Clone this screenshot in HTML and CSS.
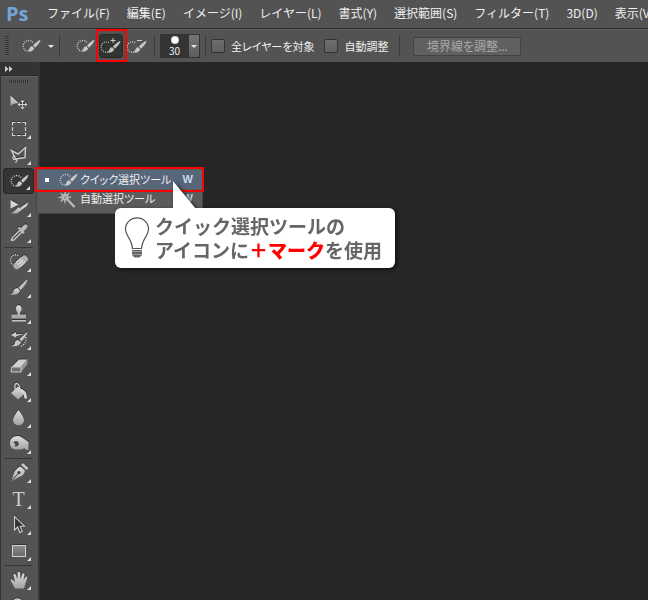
FILE: index.html
```html
<!DOCTYPE html>
<html lang="ja">
<head>
    <meta charset="UTF-8">
    <meta name="viewport" content="width=device-width, initial-scale=1.0">
    <title>クイック選択ツール</title>
    <link rel="stylesheet" href="styles.css">
</head>
<body>

<!-- アイコン定義 -->
<svg class="defs" aria-hidden="true">
    <defs>
        <linearGradient id="metal" x1="0" y1="0" x2="0" y2="1">
            <stop offset="0" stop-color="#dedede"/>
            <stop offset="1" stop-color="#a2a2a2"/>
        </linearGradient>
        <linearGradient id="fade" x1="0" y1="0" x2="0" y2="1">
            <stop offset="0" stop-color="#8c8c8c"/>
            <stop offset="1" stop-color="#686868"/>
        </linearGradient>
    </defs>
    <symbol id="quick" viewBox="0 0 22 20">
        <path d="M13 6.5A5.5 5.5 0 1 0 7 15.2" fill="none" stroke="#d2d2d2" stroke-width="1.3" stroke-dasharray="1 1.2"/>
        <path d="M20.5 4Q18 4 13 9.5L15 11.7Q20 7 20.5 4Z" fill="#c8c8c8"/>
        <path d="M12.3 10.2L14.3 12.4Q12.5 16.5 6.5 15.2Q9.5 14 9.5 12.2Q10.2 10 12.3 10.2Z" fill="#c8c8c8"/>
    </symbol>
    <symbol id="quick-add" viewBox="0 0 22 20">
        <path d="M9 6.6A5.2 5.2 0 1 0 8 16" fill="none" stroke="#bcbcbc" stroke-width="1.3" stroke-dasharray="1 1.2"/>
        <path d="M20.5 5Q18 5 13 10.5L15 12.7Q20 8 20.5 5ZM12.3 11.2L14.3 13.4Q12.5 17.5 6.5 16.2Q9.5 15 9.5 13.2Q10.2 11 12.3 11.2Z" fill="#bebebe"/>
        <path d="M10.5 4.5h5M13 2v5" stroke="#cfcfcf"/>
    </symbol>
    <symbol id="quick-sub" viewBox="0 0 22 20">
        <path d="M9 6.6A5.2 5.2 0 1 0 8 16" fill="none" stroke="#d2d2d2" stroke-width="1.3" stroke-dasharray="1 1.2"/>
        <path d="M20.5 5Q18 5 13 10.5L15 12.7Q20 8 20.5 5ZM12.3 11.2L14.3 13.4Q12.5 17.5 6.5 16.2Q9.5 15 9.5 13.2Q10.2 11 12.3 11.2Z" fill="#c8c8c8"/>
        <path d="M11 4.5h5" stroke="#d0d0d0"/>
    </symbol>
    <symbol id="wand" viewBox="0 0 22 20">
        <path d="M9 9L17.500 18" stroke="#bdbdbd" stroke-width="2.200"/>
        <path d="M8 1l1.300 4.500L13 3l-2 4.200 4.500.8L11 9.500l2 4-4-2.500L8 16 6.800 11 3 13.500 5 9.500 0 8.500l5-1.300L3 3.500l4 2z" fill="#b5b5b5"/>
        <circle cx="8" cy="8.500" r="1.500" fill="#999"/>
    </symbol>
</svg>

<header class="menubar">
    <span class="logo">Ps</span>
    <nav class="menu">
        <a href="#">ファイル(F)</a>
        <a href="#">編集(E)</a>
        <a href="#">イメージ(I)</a>
        <a href="#">レイヤー(L)</a>
        <a href="#">書式(Y)</a>
        <a href="#">選択範囲(S)</a>
        <a href="#">フィルター(T)</a>
        <a href="#">3D(D)</a>
        <a href="#">表示(V)</a>
    </nav>
</header>

<div class="options">
    <span class="grip"></span>
    <button class="preset" aria-label="ツールプリセット">
        <svg class="icon"><use href="#quick"/></svg>
        <span class="caret"></span>
    </button>
    <span class="divider"></span>
    <div class="modes">
        <button class="mode" aria-label="新規選択"><svg class="icon"><use href="#quick"/></svg></button>
        <button class="mode mode-on" aria-label="選択範囲に追加"><svg class="icon"><use href="#quick-add"/></svg></button>
        <button class="mode" aria-label="現在の選択範囲から一部削除"><svg class="icon"><use href="#quick-sub"/></svg></button>
    </div>
    <span class="divider"></span>
    <button class="brush" aria-label="ブラシサイズ 30">
        <span class="brush-size"><span class="dot"></span>30</span>
        <span class="brush-open"><span class="caret"></span></span>
    </button>
    <span class="divider"></span>
    <div class="checks">
        <label class="check"><input type="checkbox">全レイヤーを対象</label>
        <label class="check"><input type="checkbox">自動調整</label>
    </div>
    <span class="divider"></span>
    <button class="refine" disabled>境界線を調整...</button>
</div>

<main class="workspace">
    <aside class="toolbox">
        <button class="collapse" aria-label="パネルを展開">
            <svg width="8" height="6" viewBox="0 0 8 6"><path d="M0 0l3.500 3L0 6zM4 0l3.500 3L4 6z" fill="#d0d0d0"/></svg>
        </button>
        <div class="panel">
            <span class="panel-grip"></span>
            <button class="tool single" aria-label="移動">
                <svg viewBox="0 0 22 22"><path d="M2.500 3.500v10.500l3-2.300L11 11z" fill="url(#metal)"/><path d="M14.500 8v9M10 12.500h9" stroke="#d0d0d0"/><path d="M14.500 7.500l2 2.500h-4zM14.500 17.500l2-2.500h-4zM9.500 12.500l2.500-2v4zM19.500 12.500l-2.500-2v4z" fill="#d0d0d0"/></svg>
            </button>
            <button class="tool" aria-label="長方形選択">
                <svg viewBox="0 0 22 22"><path d="M4.500 7.500v-3h3M9 4.500h4M14.500 4.500h3v3M17.500 9v4M17.500 14.500v3h-3M13 17.500H9M7.500 17.500h-3v-3M4.500 13V9" fill="none" stroke="#d2d2d2" stroke-width="1.200"/></svg>
            </button>
            <button class="tool" aria-label="多角形選択">
                <svg viewBox="0 0 22 22"><path d="M3.500 6.500L10 10l7.500-6.500-.5 10L7.500 15z" fill="none" stroke="#cacaca" stroke-width="1.500"/><path d="M7.500 12.500q-3-1-2.500 1.500t3.500 1q1 1.500-1 3.500" fill="none" stroke="#cacaca" stroke-width="1.300"/></svg>
            </button>
            <button class="tool tool-on" aria-label="クイック選択"><svg viewBox="0 0 22 20"><use href="#quick"/></svg></button>
            <button class="tool" aria-label="スライス">
                <svg viewBox="0 0 22 22"><path d="M2.500 4l8 4.500-8 4z" fill="#d6d6d6"/><path d="M20.500 6L13 11l-2 4.500L19 10z" fill="#cfcfcf"/><path d="M11 11l2.500 3L9 17.500H3z" fill="url(#metal)"/></svg>
            </button>
            <button class="tool" aria-label="スポイト">
                <svg viewBox="0 0 22 22"><path d="M12 8l2 2-8 8-2.500.5L4 16z" fill="#555" stroke="#cdcdcd" stroke-width="1.300"/><path d="M9.500 6l2-1 1.500 1 3-3q2-1.500 3 0t-.5 3.500L16 9l.5 2-1.500 1z" fill="#b8b8b8"/></svg>
            </button>
            <hr>
            <button class="tool" aria-label="スポット修復ブラシ">
                <svg viewBox="0 0 22 22"><path d="M10 4.500A4.500 5 0 1 0 5 14" fill="none" stroke="#ddd" stroke-width="1.300" stroke-dasharray="1 1.200"/><g transform="rotate(-42 13 11)"><rect x="4" y="7.500" width="17" height="7" rx="3.500" fill="#aeaeae"/><rect x="9" y="7.500" width="7" height="7" fill="#d8d8d8"/><path d="M10 9.500h5.500M10 12.500h5.500" stroke="#555" stroke-dasharray="1 1.500"/></g></svg>
            </button>
            <button class="tool" aria-label="ブラシ">
                <svg viewBox="0 0 22 22"><path d="M19 2L10.500 10.500l2 2.500Q18 8 19.500 3z" fill="#bebebe"/><path d="M9.500 11l2.500 2.500Q10 19 2 17.500q3-1 3.500-3.500t4-3z" fill="url(#metal)"/></svg>
            </button>
            <button class="tool" aria-label="コピースタンプ">
                <svg viewBox="0 0 22 22"><path d="M9.500 9.500Q7.500 7 8 4.500T10.500 2t3 2.500-1.500 5v2h6v4H3.500v-4h6z" fill="url(#metal)"/><path d="M4 17.800h14" stroke="#d2d2d2" stroke-width="1.400"/></svg>
            </button>
            <button class="tool" aria-label="ヒストリーブラシ">
                <svg viewBox="0 0 22 22"><path d="M3 6l5-3v2.200q5-.7 8 .3-4 0-8 1.700V8.500z" fill="#cecece"/><path d="M19 3L11.500 10l2 2.500Q18 8 19.500 3.500zM10.500 11l2.500 2.200Q11 18.500 3 17q4-1 4-3.500t3.500-2.500z" fill="#c6c6c6"/><path d="M18 8q.5 7-5 9" fill="none" stroke="#ddd" stroke-width="1.400" stroke-dasharray="1.200 1.300"/></svg>
            </button>
            <button class="tool" aria-label="消しゴム">
                <svg viewBox="0 0 22 22"><path d="M3.500 12L11 4.500h8.500L13 12z" fill="#d0d0d0"/><path d="M19.500 4.500v4.500L13 17v-5z" fill="#999"/><path d="M3.500 12H13v5H3z" fill="#707070" stroke="#c8c8c8"/></svg>
            </button>
            <button class="tool" aria-label="塗りつぶし">
                <svg viewBox="0 0 22 22"><path d="M3 12L10 5.500l8 6L10 18.500z" fill="url(#metal)"/><path d="M7 9V4.500q.5-3 3-1.500t1 8" fill="none" stroke="#cfcfcf" stroke-width="1.300"/><path d="M13 8q5.500 1 6 8.500-1 3-3-.5.500-3.500-3-5z" fill="#d6d6d6"/></svg>
            </button>
            <button class="tool" aria-label="ぼかし">
                <svg viewBox="0 0 22 22"><path d="M10.500 3q5.500 7 5.500 10a5.500 5.200 0 0 1-11 0q0-3 5.500-10z" fill="url(#metal)"/></svg>
            </button>
            <button class="tool" aria-label="スポンジ">
                <svg viewBox="0 0 22 22"><path d="M4 5q4-3.500 10-.5l6.500 4.500v7.500q-3 1.500-4-1.500-3 2-6.500 1.500-7 .5-8-5Q1.500 7 4 5z" fill="url(#metal)"/><path d="M4.500 10.500q1-2.500 3.500-2.500t3 3q-1 3-4 2.500z" fill="#484848"/><path d="M2 9.500q3-.5 4.500.8t.5 2.500q-4 0-5-3.300z" fill="#bbb"/></svg>
            </button>
            <hr>
            <button class="tool" aria-label="ペン">
                <svg viewBox="0 0 22 22"><path d="M13 3l2-2 5.500 5-2 2z" fill="#c5c5c5"/><path d="M12.500 4.500l4.500 4q-1 5-5.500 6.500L3 19.500 6 11q2-5 6.500-6.500z" fill="url(#metal)"/><path d="M3.500 19L11 10.500" stroke="#484848"/><circle cx="11" cy="10.500" r="1.500" fill="#3d3d3d"/></svg>
            </button>
            <button class="tool tool-type" aria-label="横書き文字">T</button>
            <button class="tool" aria-label="パスコンポーネント選択">
                <svg viewBox="0 0 22 22"><path d="M6.500 2.500v13.500l3.200-3 2 5.500 2.500-1-2-5 4.300-.5z" fill="#333" stroke="#cdcdcd" stroke-width="1.100"/></svg>
            </button>
            <button class="tool" aria-label="長方形">
                <svg viewBox="0 0 22 22"><rect x="4.500" y="5.500" width="13" height="11" fill="url(#fade)" stroke="#d2d2d2"/></svg>
            </button>
            <hr>
            <button class="tool" aria-label="手のひら">
                <svg viewBox="0 0 22 22"><path d="M7 19.500L2.500 11q1-1.500 2.500 0l2 2L5.500 5.500q1.500-1.500 2.300.5L9.500 10 9.700 3.500q1.500-1.500 2.300 0L12.500 10l2-5.500q1.800-1 2 .8L15.500 11l2.300-3.500q1.700-.5 1.500 1L16 19.500z" fill="url(#metal)"/></svg>
            </button>
            <button class="tool single" aria-label="ズーム">
                <svg viewBox="0 0 22 22"><circle cx="9.500" cy="9" r="5" fill="#777" stroke="#ccc" stroke-width="1.500"/><path d="M13 13l5 5" stroke="#ccc" stroke-width="2.500"/></svg>
            </button>
        </div>
    </aside>
</main>

<!-- ツールのサブメニュー -->
<ul class="flyout">
    <li>
        <button class="flyout-item flyout-on">
            <span class="bullet"></span>
            <svg class="icon"><use href="#quick"/></svg>
            <span class="name">クイック選択ツール</span>
            <span class="key">W</span>
        </button>
    </li>
    <li>
        <button class="flyout-item">
            <span class="bullet"></span>
            <svg class="icon"><use href="#wand"/></svg>
            <span class="name">自動選択ツール</span>
            <span class="key">W</span>
        </button>
    </li>
</ul>

<div class="mark mark-mode"></div>
<div class="mark mark-flyout"></div>

<div class="tip">
    <svg class="tip-tail" viewBox="0 0 24 28"><path d="M0 0v28h23z" fill="#fff"/></svg>
    <svg class="bulb" viewBox="0 0 26 42">
        <path d="M8.500 31.500C8 22 1.500 19 1.500 12a11.500 11.200 0 0 1 23 0c0 7-6.500 10-7 19.500z" fill="#fff" stroke="#555" stroke-width="1.200"/>
        <path d="M8 33h10v5l-2.500 2.500h-5L8 38z" fill="#666"/>
        <path d="M8 34.500h10M8 37.500h10" stroke="#999"/>
    </svg>
    <p class="tip-text">クイック選択ツールの<br>アイコンに<strong>＋マーク</strong>を使用</p>
</div>

</body>
</html>
```

FILE: styles.css
```css
* {
    box-sizing: border-box;
}
body {
    margin: 0;
    height: 100vh;
    overflow: hidden;
    display: flex;
    flex-direction: column;
    position: relative;
    background: #262626;
    color: #f0f0f0;
    font-family: "Noto Sans CJK JP", sans-serif;
    font-size: 12px;
}
button {
    margin: 0;
    padding: 0;
    border: 0;
    background: none;
    color: inherit;
    font: inherit;
}
.defs {
    position: absolute;
    width: 0;
    height: 0;
}
.icon {
    width: 22px;
    height: 20px;
    flex: none;
    display: block;
}

/* メニューバー */
.menubar {
    flex: none;
    height: 29px;
    display: flex;
    align-items: center;
    padding-left: 6px;
    background: #535353;
    border-bottom: 1px solid #2b2b2b;
}
.logo {
    width: 41px;
    flex: none;
    color: #72a5d8;
    font-family: "Open Sans", sans-serif;
    font-size: 20px;
    font-weight: bold;
    line-height: 24px;
}
.menu {
    display: flex;
    gap: 17px;
    line-height: 16px;
    padding-bottom: 2px;
    white-space: nowrap;
}
.menu a {
    color: #f0f0f0;
    text-decoration: none;
}

/* オプションバー */
.options {
    flex: none;
    height: 33px;
    display: flex;
    align-items: center;
    padding-left: 5px;
    background: #535353;
    border-top: 1px solid #646464;
    white-space: nowrap;
    font-feature-settings: "palt";
}
.grip {
    width: 4px;
    height: 20px;
    margin-right: 11px;
    background: repeating-linear-gradient(#333 0 1px, #5c5c5c 1px 2px);
}
.preset {
    display: flex;
    align-items: center;
    gap: 6px;
}
.caret {
    border: 3px solid transparent;
    border-top-color: #e6e6e6;
    border-bottom: 0;
}
.divider {
    width: 1px;
    height: 22px;
    margin: 0 5px;
    background: #3c3c3c;
}
.modes {
    display: flex;
    gap: 2px;
    padding-left: 8px;
}
.mode {
    width: 24px;
    height: 24px;
    display: grid;
    place-items: center;
    border-radius: 3px;
}
.mode-on {
    background: #333;
    border: 1px solid #292929;
}
.brush {
    height: 24px;
    display: flex;
    border: 1px solid #333;
}
.brush-size {
    width: 27px;
    display: flex;
    flex-direction: column;
    align-items: center;
    background: #343434;
    font-size: 10px;
    line-height: 12px;
}
.dot {
    width: 8px;
    height: 8px;
    margin: 1px;
    border-radius: 50%;
    background: radial-gradient(#fff 40%, #aaa);
}
.brush-open {
    width: 11px;
    display: grid;
    place-items: center;
    background: linear-gradient(#747474, #5e5e5e);
    border-left: 1px solid #333;
}
.checks {
    display: flex;
    gap: 10px;
    padding-right: 6px;
    font-size: 11px;
}
.check {
    display: flex;
    align-items: center;
    gap: 6px;
    line-height: 16px;
}
.check input {
    appearance: none;
    width: 14px;
    height: 14px;
    margin: 0;
    background: linear-gradient(#6e6e6e, #606060);
    border: 1px solid #333;
    border-radius: 2px;
}
.refine {
    width: 108px;
    height: 19px;
    margin-left: 8px;
    background: #606060;
    border: 1px solid #424242;
    border-radius: 2px;
    color: #a8a8a8;
    line-height: 16px;
}

/* ツールパネル */
.workspace {
    flex: 1;
    min-height: 0;
    display: flex;
}
.toolbox {
    width: 40px;
    border-left: 1px solid #333;
    border-right: 2px solid #353535;
    background: #535353;
}
.collapse {
    width: 100%;
    height: 14px;
    display: flex;
    align-items: center;
    padding-left: 4px;
    background: #333;
    border-bottom: 1px solid #292929;
}
.panel {
    display: flex;
    flex-direction: column;
    align-items: center;
    padding: 3px 2px 0 0;
    border-top: 1px solid #636363;
}
.panel-grip {
    width: 20px;
    height: 3px;
    margin-bottom: 7px;
    background: repeating-linear-gradient(90deg, #303030 0 1px, #5c5c5c 1px 2px);
}
.tool {
    width: 31px;
    height: 26px;
    flex: none;
    display: grid;
    place-items: center;
    position: relative;
    border-radius: 3px;
}
.tool svg {
    width: 22px;
    height: 22px;
    filter: drop-shadow(0 -1px 0 #333);
}
.tool::after {
    content: "";
    position: absolute;
    right: 3px;
    bottom: 3px;
    border: 2px solid transparent;
    border-right-color: #ddd;
    border-bottom-color: #ddd;
}
.single::after {
    display: none;
}
.tool-on {
    background: #353535;
    border: 1px solid #262626;
}
.tool-type {
    color: #cdcdcd;
    font-family: "Liberation Serif", serif;
    font-size: 20px;
    line-height: 24px;
}
.panel hr {
    width: 29px;
    height: 1px;
    flex: none;
    margin: 1px 0;
    border: 0;
    background: #353535;
}

/* サブメニュー */
.flyout {
    position: absolute;
    left: 36px;
    top: 168px;
    width: 167px;
    margin: 0;
    padding: 1px 0 5px;
    list-style: none;
    background: #5b5b5b;
    border: 1px solid #454545;
    font-size: 11px;
    font-feature-settings: "palt";
}
.flyout-item {
    width: 100%;
    height: 19px;
    display: flex;
    align-items: center;
    padding: 0 9px 0 8px;
    text-align: left;
    line-height: 16px;
}
.flyout-on {
    background: #58667a;
}
.bullet {
    width: 4px;
    height: 4px;
    margin-right: 8px;
}
.flyout-on .bullet {
    background: #fff;
}
.name {
    flex: 1;
    padding: 0 0 2px 1px;
}
.key {
    padding-bottom: 2px;
    color: #c5dbed;
    font-family: "Liberation Sans", sans-serif;
    font-weight: bold;
}

/* 注目箇所の赤枠 */
.mark {
    position: absolute;
    border: 2px solid #f00;
    pointer-events: none;
}
.mark-mode {
    left: 96px;
    top: 29px;
    width: 31px;
    height: 33px;
}
.mark-flyout {
    left: 35px;
    top: 167px;
    width: 169px;
    height: 25px;
}

/* 吹き出し */
.tip {
    position: absolute;
    left: 115px;
    top: 208px;
    display: flex;
    align-items: center;
    gap: 5px;
    padding: 6px 13px 6px 9px;
    background: #fff;
    border-radius: 6px;
    color: #666;
    filter: drop-shadow(2px 2px 2px #111);
}
.tip-tail {
    position: absolute;
    left: 58px;
    top: -27px;
    width: 24px;
    height: 28px;
}
.bulb {
    width: 26px;
    height: 42px;
}
.tip-text {
    margin: 0;
    font-size: 19px;
    font-weight: bold;
    line-height: 24px;
    white-space: nowrap;
}
.tip-text strong {
    color: #f00;
}
```
